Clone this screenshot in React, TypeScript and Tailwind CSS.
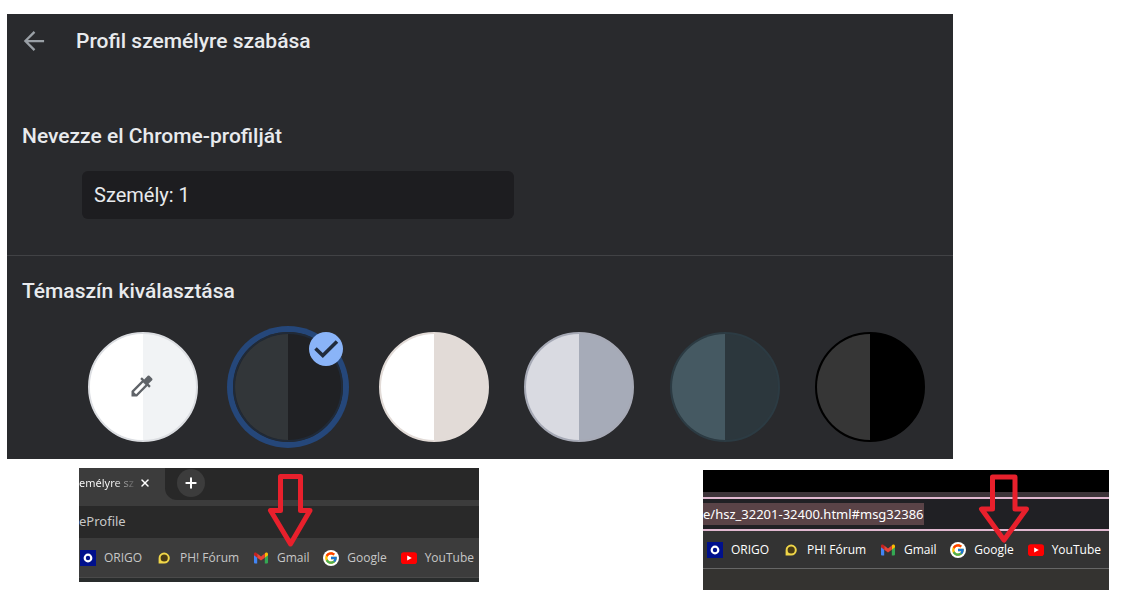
import React from 'react';
import { Plus, X } from 'lucide-react';
import { FcGoogle } from 'react-icons/fc';

const themes = [
  { name: 'Egyéni szín', left: 'bg-white', right: 'bg-[#f1f3f5]', border: 'border-[#dcdee2]', picker: true },
  { name: 'Sötét', left: 'bg-[#323639]', right: 'bg-[#202124]', border: 'border-[#202a38]', selected: true },
  { name: 'Homok', left: 'bg-white', right: 'bg-[#e2dbd7]', border: 'border-[#e2dbd7]' },
  { name: 'Szürke', left: 'bg-[#d9dae1]', right: 'bg-[#a6abb8]', border: 'border-[#a6a9b5]' },
  { name: 'Kékesszürke', left: 'bg-[#455962]', right: 'bg-[#2c373d]', border: 'border-[#2c3b43]' },
  { name: 'Fekete', left: 'bg-[#363636]', right: 'bg-black', border: 'border-black' }
];

const OrigoIcon = () => (
  <svg viewBox="0 0 16 16" className="w-4 h-4 shrink-0">
    <rect width="16" height="16" fill="#00108c" />
    <circle cx="8" cy="8" r="3.3" fill="none" stroke="#fff" strokeWidth="2.2" />
  </svg>
);

const ForumIcon = () => (
  <svg viewBox="0 0 16 16" className="w-4 h-4 shrink-0">
    <path d="M2.6 13.6V8.2a5.6 5.5 0 1 1 5.6 5.4Z" fill="#f0d648" />
    <circle cx="8.2" cy="8" r="3.6" fill="#4a3c16" />
  </svg>
);

const GmailIcon = () => (
  <svg viewBox="0 0 16 16" className="w-4 h-4 shrink-0">
    <path d="M1 4.4v8.2c0 .5.4.9.9.9h2.3V6.8Z" fill="#4285f4" />
    <path d="M15 4.4v8.2c0 .5-.4.9-.9.9h-2.3V6.8Z" fill="#34a853" />
    <path d="M11.8 3.6v4.2L15 5.3V4c0-1.5-1.6-2-2.5-1.2Z" fill="#fbbc04" />
    <path d="M4.2 7.8V3.5L8 6.4l3.8-2.9v4.3L8 10.6Z" fill="#ea4335" />
    <path d="M1 4v1.3l3.2 2.5V3.5l-.7-.6C2.5 2.2 1 2.6 1 4Z" fill="#c5221f" />
  </svg>
);

const GoogleIcon = () => (
  <span className="w-4 h-4 shrink-0 rounded-full bg-white flex items-center justify-center">
    <FcGoogle className="w-3.5 h-3.5" />
  </span>
);

const YouTubeIcon = () => (
  <svg viewBox="0 0 16 16" className="w-4 h-4 shrink-0">
    <rect y="2.2" width="16" height="11.8" rx="2.8" fill="#f00" />
    <path d="m6.2 5.6 4.6 2.5-4.6 2.5Z" fill="#fff" />
  </svg>
);

const bookmarks = [
  { label: 'ORIGO', Icon: OrigoIcon },
  { label: 'PH! Fórum', Icon: ForumIcon },
  { label: 'Gmail', Icon: GmailIcon },
  { label: 'Google', Icon: GoogleIcon },
  { label: 'YouTube', Icon: YouTubeIcon }
];

const Bookmarks: React.FC = () => (
  <nav className="flex items-center justify-between h-full text-xs whitespace-nowrap font-['Open_Sans','Noto_Sans',sans-serif]">
    {bookmarks.map(({ label, Icon }) => (
      <a key={label} href="#" className="flex items-center gap-2">
        <Icon />
        {label}
      </a>
    ))}
  </nav>
);

const Swatch: React.FC<{ theme: (typeof themes)[number] }> = ({ theme }) => (
  <label className="relative block w-[110px] h-[110px] rounded-full cursor-pointer has-checked:ring-6 has-checked:ring-[#25477a]">
    <input type="radio" name="theme" aria-label={theme.name} defaultChecked={theme.selected} className="sr-only" />
    <span className={`flex h-full rounded-full overflow-hidden border-2 ${theme.border} ${theme.right}`}>
      <span className={`w-1/2 ${theme.left}`} />
    </span>
    {theme.picker && (
      <svg viewBox="0 0 24 24" className="absolute left-10 top-10 w-7 h-7" fill="#5f6368">
        <path d="m20.71 5.63-2.34-2.34a1 1 0 0 0-1.41 0l-3.12 3.12-1.93-1.91-1.41 1.41 1.42 1.42L3 16.25V21h4.75l8.92-8.92 1.42 1.42 1.41-1.41-1.92-1.92 3.12-3.12c.4-.4.4-1.03.01-1.42ZM6.92 19 5 17.08l8.06-8.06 1.92 1.92L6.92 19Z" />
      </svg>
    )}
    {theme.selected && (
      <span className="absolute right-0 top-0 w-[34px] h-[34px] rounded-full bg-[#8ab4f8] flex items-center justify-center">
        <svg viewBox="0 0 34 34" className="w-full h-full" fill="none" stroke="#202b3c" strokeWidth="3.6">
          <path d="m6.5 16.5 7.3 7L28 9.5" />
        </svg>
      </span>
    )}
  </label>
);

const App: React.FC = () => {
  return (
    <div className="min-h-screen bg-white pt-3.5 pl-[7px] pr-[21px] font-[Roboto,sans-serif]">
      <main className="mr-39 bg-[#292a2d] text-[#e8eaed] pb-[17px]">
        <header className="flex items-center h-14 pl-4 gap-[30px]">
          <button type="button" aria-label="Vissza">
            <svg viewBox="0 0 24 24" className="w-[23px] h-6" fill="none" stroke="#9aa0a6" strokeWidth="2.4">
              <path d="M22 11H3M12 1.5 2.5 11l9.5 9.5" />
            </svg>
          </button>
          <h1 className="text-[21px] font-medium">Profil személyre szabása</h1>
        </header>

        <section className="border-b border-[#414245] pt-13 pb-9">
          <label htmlFor="profile" className="block pl-[15px] text-[21px] leading-7 font-medium">
            Nevezze el Chrome-profilját
          </label>
          <input
            id="profile"
            defaultValue="Személy: 1"
            className="block mt-[21px] ml-[75px] w-[432px] max-w-full h-12 rounded-md bg-[#1d1d20] px-3 text-xl outline-none"
          />
        </section>

        <section className="pt-[21px]">
          <h2 className="pl-[15px] text-[21px] leading-7 font-medium">Témaszín kiválasztása</h2>
          <div className="flex justify-between mt-[27px] pl-[81px] pr-7">
            {themes.map((theme) => (
              <Swatch key={theme.name} theme={theme} />
            ))}
          </div>
        </section>
      </main>

      <div className="flex items-start justify-between pl-18 pt-[9px] font-['Noto_Sans',sans-serif]">
        {/* Dark browser window */}
        <div className="relative w-[400px] bg-[#292929] text-[#c7c7c7]">
          <div className="flex h-8 bg-[#3c3c3c] text-white">
            <div className="flex items-center justify-between w-[86px] pb-0.5 pr-3.5">
              <span className="whitespace-nowrap text-[11px] bg-linear-to-r from-white from-60% to-[#5c5c5c] bg-clip-text text-transparent">
                emélyre sz
              </span>
              <button type="button" aria-label="Lap bezárása">
                <X className="w-3 h-3" strokeWidth={3} />
              </button>
            </div>
            <div className="flex-1 rounded-bl-xl bg-[#282828] pl-3 pt-px">
              <button type="button" aria-label="Új lap" className="flex items-center justify-center w-7 h-7 rounded-full bg-[#3c3c3c]">
                <Plus className="w-4 h-4" strokeWidth={3} />
              </button>
            </div>
          </div>
          <div className="flex items-center h-[38px] border-t-6 border-[#3c3c3c] text-[13px]">eProfile</div>
          <div className="h-10 bg-[#3c3c3c] border-b border-[#4a4a4a] pl-px pr-[5px]">
            <Bookmarks />
          </div>
          <div className="h-1 bg-[#292c2c]" />
          <svg viewBox="0 0 48 76" className="absolute left-[187px] top-1 w-12 h-19" fill="none" stroke="#e8202c" strokeWidth="5" strokeLinejoin="round">
            <path d="M14.5 4.5h20v34H44L24.5 72 4.5 38.5h10Z" />
          </svg>
        </div>

        {/* Black browser window with the address selected */}
        <div className="relative mt-0.5 w-[406px] bg-[#343330] text-white">
          <div className="h-[27px] bg-black border-b-5 border-[#3d3439]" />
          <div className="flex items-center h-[34px] border-y-2 border-[#e0b8d0] bg-[#202024] text-[13px]">
            <span className="bg-[#5a4347] leading-[22px] whitespace-nowrap">e/hsz_32201-32400.html#msg32386</span>
          </div>
          <div className="h-[38px] bg-[#333333] border-b border-[#666666] pl-1 pr-2">
            <Bookmarks />
          </div>
          <div className="h-[21px]" />
          <svg viewBox="0 0 52 72" className="absolute left-[275px] top-[3px] w-13 h-18" fill="none" stroke="#e8202c" strokeWidth="5" strokeLinejoin="round">
            <path d="M14.5 4H37v32h11.5L26 67 3.5 36h11Z" />
          </svg>
        </div>
      </div>
    </div>
  );
};

export default App;
